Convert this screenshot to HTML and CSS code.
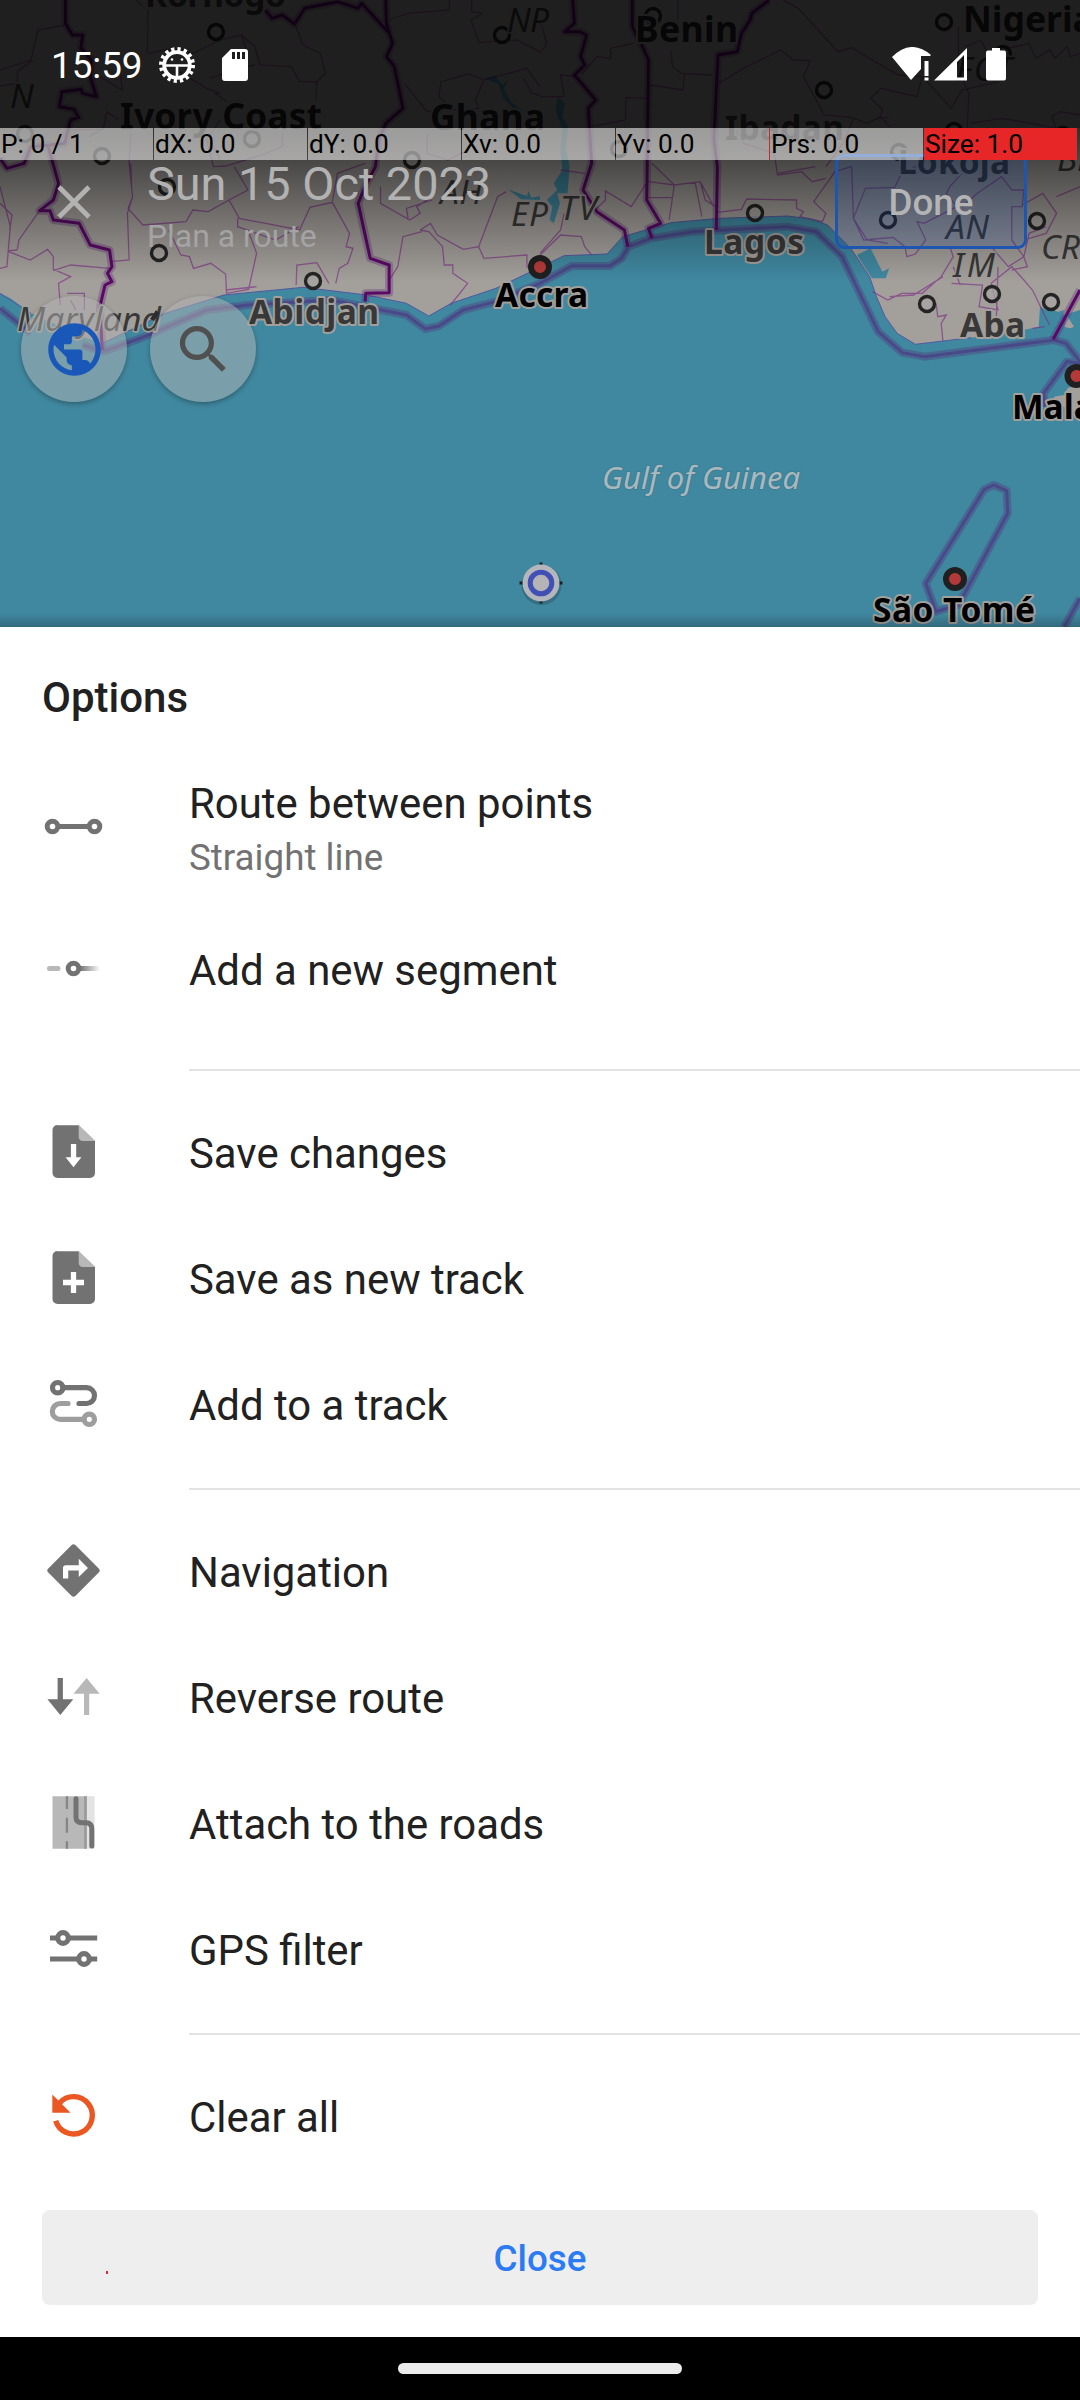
FILE: index.html
```html
<!DOCTYPE html>
<html lang="en">
<head>
<meta charset="utf-8">
<title>Plan a route</title>
<link rel="stylesheet" href="styles.css">
</head>
<body>
<div class="screen">
  <section class="map-area">
    <svg class="map" viewBox="0 0 3136 1881" preserveAspectRatio="none" aria-hidden="true">
      <path class="land" d="M0 0H3136V930L3090 945L3050 925L3030 960L3045 975L2970 990L2820 1013L2658 1033L2605 1000L2570 950L2545 890L2525 830L2470 745L2403 675L2358 658L2288 648L2088 655L1948 668L1808 710L1763 762L1638 767L1568 802L1440 865L1310 910L1245 948L1180 910L1065 885L880 862L650 885L480 940L297 1030L240 1010L90 940L30 895L0 880Z"/>
      <path class="land" d="M3136 1150L3100 1165L3090 1185L3060 1190L3075 1215L3136 1240ZM3090 980l10-30 25 40Z"/>
      <path class="water" d="M1408 237l30-12 20 30 20-18-15 28 20 40 40 30-30-8-30-30-15-45ZM1475 568l55 20 5-15 8 20 25-5v12l-55-2ZM1620 290l20 20-8 40 18 30-8 60 12 60-6 80-30 0 8 30-18 60-12-10 8-40-16-20 30-30-10-20 25-40-6-60 6-60-20-60ZM2488 765l40-20 34 70 20-10-10 30-40 0ZM3020 920l40 20 30-10-10 40 20 20 36-20v60l-60-20-60-30Z"/>
      <g class="district">
        <path d="M430 0L428 160M190 75L110 90L90 180L0 210M95 180L50 215L50 250L0 258M430 160L500 145L560 160L640 120L700 105L740 140L755 195L845 200L870 245L920 245L945 220L930 160L880 135L858 75M395 0L415 20M700 105L715 145L690 165M520 215L600 265L640 280L625 280L660 305M610 235L690 205L740 195M290 230L355 270L350 225M210 390L300 388L310 335L345 360M300 385L260 410M920 245L917 300M640 360L600 420L620 500L655 498L760 465L820 440L820 400M620 440L640 480M380 400L375 490L385 590L370 640L375 780L320 785M385 590L372 625L415 675L540 665L560 630L605 635L665 600L720 570L680 500M380 490L382 555M665 600L695 655L870 690L900 622L965 607L1015 700L1005 740L1025 745L1010 790L985 805L975 850M690 655L690 680L800 720L868 680M490 690L525 765L550 770L562 805L612 790L655 822L658 880L722 868L745 760L720 690M655 870L745 860M860 855L862 795L920 788L955 850M965 605L980 520L1060 490M1105 560L1105 610L1190 660L1220 640L1210 620L1255 590M1185 655L1180 625L1255 600M1220 690L1250 670L1270 705L1345 748L1390 740L1445 590L1470 575M1220 690L1245 695L1285 740L1290 795L1315 795L1315 820L1358 850L1308 915M1130 840L1155 800L1170 710L1225 695M1390 740L1405 775L1530 765L1530 800L1555 820M1175 250L1240 335L1390 325L1380 300L1405 240L1360 222L1280 245L1275 290L1320 330M1130 60L1185 40L1305 30L1305 0M1370 0L1370 35L1400 40L1368 60L1390 128L1500 120L1568 155M1405 240L1530 205L1568 260M1520 235L1545 280L1568 285M0 560L30 680L20 800L0 805M50 750L55 720L115 632M25 752L50 750M25 755L88 780L138 748L155 770L155 808L205 830L170 850L175 915M155 812L205 795L318 805M195 880L245 880L245 930M205 900L220 930M0 610L35 645L28 690M1240 400V460L1300 480L1350 455"/>
        <path transform="translate(1568 0)" d="M400 0L400 60M270 130L205 145L205 175L165 170L120 225M380 150L385 200L410 220L500 225M320 255L415 270L420 220M315 295L250 293L248 360L150 380M520 250L590 205L700 150L735 180L785 182L765 230L825 345L905 352L950 370L990 350L1015 380M705 0L750 25L865 155L905 143L1040 225L1110 230L1095 290L990 265L960 295L995 330L985 355L1012 352M1110 230L1195 325L1225 270L1335 245L1310 200M0 60L20 130L0 160M0 290L70 290L60 225L110 230M1215 80V210L1245 280L1240 400M1235 140L1280 120L1300 160L1420 130L1440 175L1480 150L1495 175L1530 140L1540 170L1568 160M1250 370L1340 355L1400 365L1500 385L1485 350L1510 335L1568 345M910 355L880 430L830 500M560 375L590 430L680 460L690 525L760 515L790 545L830 535M690 520L800 500M315 545L390 555L465 545L480 600L510 620M390 555L375 660M325 490L390 555M465 545L505 620M315 593L385 592M315 540L265 620L190 573L190 600L160 630M510 638L585 628L600 597L745 600L745 625L765 635L755 650L820 665L830 640L795 605L860 510M0 760L60 690L70 640M0 765L60 705L120 710L130 740L150 765M60 510L130 520M450 545L470 650M855 515L905 500L910 655L940 720L1025 712L1060 740L1065 770L1090 762L1120 720L1095 665L1115 670L1210 620L1180 580L1190 560L1225 520M910 655L945 565L1030 562L1050 520L1110 490M910 655L950 720L1010 730M1225 620L1270 580L1340 530L1370 570L1405 570L1400 620L1370 620L1370 720L1405 770L1360 800L1310 740M1400 615L1460 580L1500 640L1470 700L1405 720M1405 770L1420 700L1470 680M1190 740L1200 770L1165 830L1110 880L1050 880L1010 900L965 875M1170 830L1085 885L1015 890M1195 850L1285 855L1275 920L1330 930L1310 850L1370 800L1405 840L1430 870L1465 945L1480 975M1150 910L1155 950L1180 945L1165 970L1170 1025M1200 800L1220 855M1430 985L1465 980M1500 590L1568 560M1405 770L1415 800L1370 810M1330 800L1325 960"/>
      </g>
      <g class="coast"><path d="M0 880L90 940M297 1030L480 940L650 885L880 862L1065 885L1180 910L1245 948L1310 910L1440 865L1568 802L1638 767L1763 762L1808 710L1948 668L2088 655L2288 648L2358 658L2403 675L2470 745L2525 830L2545 890L2570 950L2605 1000L2658 1033L2820 1013"/></g>
      <g>
        <path class="sea-halo" d="M0 925L90 1000M240 1035L300 1055L420 1010L600 930L720 915L960 900L1180 945L1235 987L1275 978L1345 930L1440 905L1568 850L1660 798L1770 798L1805 775L1825 740L1890 715L2010 695L2285 680L2370 695L2445 770L2550 995L2620 1058L2685 1070L3060 1020L3095 1030L3136 1085M3136 1090L3098 1085L3030 1180L3035 1220M2886 1455L2923 1472L2926 1540L2783 1815L2718 1835L2688 1750L2858 1468ZM3090 1881L3136 1795"/>
        <path class="sea-line" d="M0 925L90 1000M240 1035L300 1055L420 1010L600 930L720 915L960 900L1180 945L1235 987L1275 978L1345 930L1440 905L1568 850L1660 798L1770 798L1805 775L1825 740L1890 715L2010 695L2285 680L2370 695L2445 770L2550 995L2620 1058L2685 1070L3060 1020L3095 1030L3136 1085M3136 1090L3098 1085L3030 1180L3035 1220M2886 1455L2923 1472L2926 1540L2783 1815L2718 1835L2688 1750L2858 1468ZM3090 1881L3136 1795"/>
      </g>
      <g>
        <path class="country-halo" d="M190 0L190 70L210 105L240 105L235 145L265 180L262 230L280 290L240 280L235 268L180 275L172 320L215 328L228 352L205 360L188 430L145 435L90 440L70 490L20 505L0 475M140 440L170 550L155 600L115 632L145 632L155 660L230 670L262 735L318 750L325 800L312 820L325 845L305 855L290 920L297 1050M770 30L790 55L820 45L855 72L885 25L980 5L1040 25L1050 10L1130 100M1120 0L1122 70L1140 130L1122 170L1145 200L1170 325L1120 370L1100 420L1090 500L1060 560L1040 610L1075 775L1130 795L1130 878L1062 880L1060 905M1663 0L1668 70L1640 95L1683 95L1703 105L1686 170L1698 195L1668 225L1730 300L1708 325L1718 490L1693 570L1733 635L1813 690L1823 740M1836 0L1836 80L1868 145L1883 180L1878 600L1918 670L1883 685L1893 715M2233 0L2183 40L2178 60L2153 100L2141 155L2085 165L2073 420L2083 500L2080 690M3136 870L3058 1018"/>
        <path class="country-line" d="M190 0L190 70L210 105L240 105L235 145L265 180L262 230L280 290L240 280L235 268L180 275L172 320L215 328L228 352L205 360L188 430L145 435L90 440L70 490L20 505L0 475M140 440L170 550L155 600L115 632L145 632L155 660L230 670L262 735L318 750L325 800L312 820L325 845L305 855L290 920L297 1050M770 30L790 55L820 45L855 72L885 25L980 5L1040 25L1050 10L1130 100M1120 0L1122 70L1140 130L1122 170L1145 200L1170 325L1120 370L1100 420L1090 500L1060 560L1040 610L1075 775L1130 795L1130 878L1062 880L1060 905M1663 0L1668 70L1640 95L1683 95L1703 105L1686 170L1698 195L1668 225L1730 300L1708 325L1718 490L1693 570L1733 635L1813 690L1823 740M1836 0L1836 80L1868 145L1883 180L1878 600L1918 670L1883 685L1893 715M2233 0L2183 40L2178 60L2153 100L2141 155L2085 165L2073 420L2083 500L2080 690M3136 870L3058 1018"/>
      </g>
    </svg>
    <svg class="map" viewBox="0 0 1080 627">
      <g class="town">
        <circle cx="216" cy="32" r="7.5"/><circle cx="502" cy="35" r="7.5"/><circle cx="25" cy="134" r="7.5"/><circle cx="102" cy="156" r="7.5"/><circle cx="252" cy="139" r="7.5"/><circle cx="412" cy="160" r="7.5"/><circle cx="167" cy="187" r="7.5"/><circle cx="159" cy="253" r="7.5"/><circle cx="313" cy="281" r="7.5"/><circle cx="653" cy="16" r="7.5"/><circle cx="944" cy="22" r="7.5"/><circle cx="1003" cy="54" r="7.5"/><circle cx="824" cy="90" r="7.5"/><circle cx="954" cy="131" r="7.5"/><circle cx="1063" cy="135" r="7.5"/><circle cx="619" cy="149" r="7.5"/><circle cx="899" cy="152" r="7.5"/><circle cx="755" cy="213" r="7.5"/><circle cx="888" cy="220" r="7.5"/><circle cx="1037" cy="221" r="7.5"/><circle cx="927" cy="304" r="7.5"/><circle cx="992" cy="294" r="7.5"/><circle cx="1051" cy="302" r="7.5"/>
      </g>
      <g class="capital">
        <circle cx="540" cy="267" r="9"/><circle cx="955" cy="579" r="9"/><circle cx="1076.500" cy="376" r="9"/>
      </g>
      <g class="label">
        <text x="145" y="7" textLength="141">Korhogo</text>
        <text class="country" x="120" y="129" textLength="202">Ivory Coast</text>
        <text class="country" x="430" y="130" textLength="115">Ghana</text>
        <text class="country" x="635" y="42" textLength="103">Benin</text>
        <text class="country" x="963" y="32">Nigeria</text>
        <text x="725" y="140" textLength="119">Ibadan</text>
        <text x="898" y="174" textLength="112">Lokoja</text>
        <text x="704" y="254" textLength="100">Lagos</text>
        <text x="249" y="324" textLength="130">Abidjan</text>
        <text x="960" y="337" textLength="65">Aba</text>
      </g>
      <g class="label label-capital">
        <text x="495" y="307" textLength="93">Accra</text>
        <text x="1012" y="419">Malabo</text>
        <text x="873" y="622" textLength="162">São Tomé</text>
      </g>
      <g class="label label-region">
        <text x="10" y="108">N</text>
        <text x="507" y="32" textLength="42">NP</text>
        <text x="440" y="204" textLength="42">AH</text>
        <text x="511" y="226" textLength="37">EP</text>
        <text x="560" y="220" textLength="37">TV</text>
        <text x="956" y="81" textLength="56">FCT</text>
        <text x="946" y="239" textLength="43">AN</text>
        <text x="953" y="277" textLength="42">IM</text>
        <text x="1041" y="259">CRS</text>
        <text x="1057" y="171">BE</text>
        <text x="17" y="331" textLength="144">Maryland</text>
      </g>
      <path d="M150 319l6-9 3 3-5 8z" fill="#2c2c2c"/>
      <text class="gulf" x="602" y="489" textLength="198">Gulf of Guinea</text>
      <g>
        <circle cx="541.500" cy="585" r="20" fill="#000" opacity=".18"/>
        <path d="M519.500 583h43M541 562.500v41" stroke="#14202a" stroke-width="3"/>
        <circle cx="541" cy="583" r="18.500" fill="#b4b6bc"/>
        <circle cx="541" cy="583" r="10.800" fill="#b4b4b6" stroke="#4150b4" stroke-width="5"/>
      </g>
    </svg>
    <div class="scrim"></div>
    <header class="content">
      <div class="status">
        <span class="clock">15:59</span>
        <svg class="gear" viewBox="0 0 38 38"><circle cx="19" cy="19" r="16" fill="none" stroke="#fff" stroke-width="4" stroke-dasharray="3.200 3.083"/><circle cx="19" cy="19" r="12.800" fill="none" stroke="#fff" stroke-width="3.800"/><path d="M6 19.500h26M19 19.500v13" stroke="#fff" stroke-width="2.600"/><circle cx="14" cy="13.500" r="1.300" fill="#fff"/><circle cx="24" cy="13.500" r="1.300" fill="#fff"/></svg>
        <svg class="sd" viewBox="0 0 26 32"><path fill="#fff" fill-rule="evenodd" d="M9 0H23a3 3 0 0 1 3 3V29a3 3 0 0 1-3 3H3a3 3 0 0 1-3-3V9ZM10 3v7h3V3Zm5 0v7h3V3Zm5 0v7h3V3Z"/></svg>
        <svg class="signals" viewBox="0 0 116 34"><g fill="#fff"><path d="M0 10Q19-9 39 8L38 9H29V22L19 33Z"/><path d="M32.500 14h4v15h-4zM32.500 30.500h4v3h-4z"/><path fill-rule="evenodd" d="M42 33.500L75 1V33.500ZM65 15V30.500h7V8Z"/><path d="M100 1h8v2.500h4a2 2 0 0 1 2 2V31.500a2 2 0 0 1-2 2H96a2 2 0 0 1-2-2V5.500a2 2 0 0 1 2-2h4Z"/></g></svg>
      </div>
      <div class="toolbar">
        <svg class="close-x" viewBox="0 0 34 34"><path d="M2 2L32 32M32 2L2 32" stroke="#b2b2b2" stroke-width="4.800"/></svg>
        <div class="titles">
          <div class="title">Sun 15 Oct 2023</div>
          <div class="subtitle">Plan a route</div>
        </div>
        <div class="done">Done</div>
      </div>
      <div class="fabs">
        <div class="fab"><svg viewBox="0 0 24 24"><path fill="#1958b8" d="M12 2C6.480 2 2 6.480 2 12s4.480 10 10 10 10-4.480 10-10S17.520 2 12 2zm-1 17.930c-3.950-.49-7-3.850-7-7.930 0-.62.08-1.210.21-1.790L9 15v1c0 1.100.9 2 2 2v1.930zm6.900-2.540c-.26-.81-1-1.390-1.900-1.390h-1v-3c0-.55-.45-1-1-1H8v-2h2c.55 0 1-.45 1-1V7h2c1.100 0 2-.9 2-2v-.41c2.930 1.190 5 4.060 5 7.410 0 2.080-.8 3.970-2.100 5.390z"/></svg></div>
        <div class="fab"><svg viewBox="0 0 24 24"><path fill="#505050" d="M15.500 14h-.79l-.28-.27C15.410 12.590 16 11.110 16 9.500 16 5.910 13.090 3 9.500 3S3 5.910 3 9.500 5.910 16 9.500 16c1.610 0 3.090-.59 4.230-1.570l.27.28v.79l5 4.990L20.490 19l-4.990-5zm-6 0C7.010 14 5 11.990 5 9.500S7.010 5 9.500 5 14 7.010 14 9.500 11.990 14 9.500 14z"/></svg></div>
      </div>
    </header>
    <div class="pointer-bar">
      <span>P: 0 / 1</span><span>dX: 0.0</span><span>dY: 0.0</span><span>Xv: 0.0</span><span>Yv: 0.0</span><span class="level">Prs: 0.0</span><span class="full">Size: 1.0</span>
    </div>
  </section>

  <main class="sheet">
    <h1>Options</h1>
    <div class="row row-two">
      <svg class="icon" viewBox="0 0 63 63"><g fill="none" stroke="#727272" stroke-width="5"><circle cx="10.500" cy="31.500" r="5.300"/><circle cx="52.500" cy="31.500" r="5.300"/><path d="M16 31.500h31"/></g></svg>
      <div><div class="name">Route between points</div><div class="desc">Straight line</div></div>
    </div>
    <div class="row row-segment">
      <svg class="icon" viewBox="0 0 63 63"><defs><linearGradient id="fade" gradientUnits="userSpaceOnUse" x1="38" y1="0" x2="58" y2="0"><stop stop-color="#727272"/><stop offset="1" stop-color="#727272" stop-opacity="0"/></linearGradient></defs><rect x="5" y="29" width="13.500" height="5" rx="2.500" fill="#b8b8b8"/><rect x="38" y="29" width="20" height="5" fill="url(#fade)"/><circle cx="31.500" cy="31.500" r="5.300" fill="none" stroke="#727272" stroke-width="5"/></svg>
      <div class="name">Add a new segment</div>
    </div>
    <div class="divider divider-first"></div>
    <div class="row">
      <svg class="icon" viewBox="0 0 63 63"><path fill="#727272" d="M15 5.200H36.700L53 21V53a5 5 0 0 1-5 5H15.500a5 5 0 0 1-5-5V10a5 5 0 0 1 5-5Z"/><path fill="#b8b8b8" d="M36.700 5.200L53 21H41a4.500 4.500 0 0 1-4.300-4.500Z"/><path fill="#fff" d="M28.900 24h5.300v13.200h5.200L31.500 47.200l-7.900-10h5.300Z"/></svg>
      <div class="name">Save changes</div>
    </div>
    <div class="row">
      <svg class="icon" viewBox="0 0 63 63"><path fill="#727272" d="M15 5.200H36.700L53 21V53a5 5 0 0 1-5 5H15.500a5 5 0 0 1-5-5V10a5 5 0 0 1 5-5Z"/><path fill="#b8b8b8" d="M36.700 5.200L53 21H41a4.500 4.500 0 0 1-4.300-4.500Z"/><path stroke="#fff" stroke-width="5.300" d="M31.500 26v21M21 36.500h21"/></svg>
      <div class="name">Save as new track</div>
    </div>
    <div class="row">
      <svg class="icon" viewBox="0 0 63 63"><g fill="none" stroke-width="5.200" stroke-linecap="round"><g stroke="#9e9e9e"><circle cx="47.300" cy="47.300" r="5.200"/><path d="M42 47.300H18.200a7.900 7.900 0 0 1 0-15.800H26"/></g><g stroke="#727272"><circle cx="15.700" cy="15.700" r="5.200"/><path d="M21 15.700H44.600a7.900 7.900 0 0 1 0 15.800H37"/></g></g></svg>
      <div class="name">Add to a track</div>
    </div>
    <div class="divider"></div>
    <div class="row">
      <svg class="icon" viewBox="0 0 24 24"><path fill="#727272" d="M21.710 11.290l-9-9c-.39-.39-1.020-.39-1.410 0l-9 9c-.39.39-.39 1.020 0 1.410l9 9c.39.39 1.020.39 1.410 0l9-9c.39-.38.39-1.010 0-1.410zM14 14.500V12h-4v3H8v-4c0-.55.45-1 1-1h5V7.500l3.500 3.500-3.500 3.500z"/></svg>
      <div class="name">Navigation</div>
    </div>
    <div class="row">
      <svg class="icon" viewBox="0 0 63 63"><path fill="#727272" d="M15.600 13h5.300V34.200H31.300L18.300 50L5.400 34.200H15.600Z"/><path fill="#b8b8b8" d="M44.600 13L57.700 28.700H47.200V50H42V28.700H31.500Z"/></svg>
      <div class="name">Reverse route</div>
    </div>
    <div class="row">
      <svg class="icon" viewBox="0 0 63 63"><path fill="#b8b8b8" d="M10.500 5.200H45V57.700H10.500Z"/><path fill="#e3e3e3" d="M45 5.200h7.600V57.700H45Z"/><path stroke="#9a9a9a" stroke-width="2.600" d="M43.400 5.200V57.700"/><path stroke="#858585" stroke-width="2.300" d="M24.900 5.200V18M24.900 26.700V41.700M24.900 50.200V57.700"/><path fill="none" stroke="#727272" stroke-width="5" stroke-linecap="round" d="M34 7.700V26q0 5.700 6 5.700h4q5.800 0 5.800 6V55"/></svg>
      <div class="name">Attach to the roads</div>
    </div>
    <div class="row">
      <svg class="icon" viewBox="0 0 63 63"><g fill="none" stroke="#727272" stroke-width="5.200"><path d="M8 21h8M26 21h29.200M8 42h29M47 42h8.200"/><circle cx="21" cy="21" r="5.300"/><circle cx="42" cy="42" r="5.300"/></g></svg>
      <div class="name">GPS filter</div>
    </div>
    <div class="divider"></div>
    <div class="row">
      <svg class="icon" viewBox="0 0 63 63"><path fill="none" stroke="#ea5722" stroke-width="5.400" d="M13.700 36.700A18.700 18.700 0 1 0 17.500 19"/><path fill="#ea5722" d="M10.300 10.500V28.800H28.600Z"/></svg>
      <div class="name">Clear all</div>
    </div>
    <div class="close-button">Close<i class="touch-dot"></i></div>
  </main>
  <footer class="navbar"><div class="pill"></div></footer>
</div>
</body>
</html>
```
FILE: styles.css
```css
* { box-sizing: border-box; }
body { margin: 0; font-family: Roboto, "Liberation Sans", sans-serif; }
.screen { width: 1080px; height: 2400px; display: flex; flex-direction: column; background: #fff; overflow: hidden; }

/* Map and the controls floating above it */
.map-area { position: relative; height: 627px; flex: none; background: #4088a0; overflow: hidden; }
.map, .scrim { position: absolute; left: 0; top: 0; width: 1080px; height: 627px; }
.map path { vector-effect: non-scaling-stroke; }
.land { fill: #a39f9b; }
.water { fill: #4088a0; }
.district path { fill: none; stroke: #7a2a82; stroke-opacity: .62; stroke-width: 1.3; }
.coast path { fill: none; stroke: #5458a0; stroke-width: 1; }
.sea-halo, .country-halo { fill: none; stroke: #5a1f70; stroke-opacity: .3; stroke-width: 8; stroke-linejoin: round; }
.sea-line { fill: none; stroke: #4a4488; stroke-opacity: .85; stroke-width: 3; }
.country-line { fill: none; stroke: #5c0866; stroke-width: 3; stroke-linejoin: round; }
.town circle { fill: #a8a5a2; fill-opacity: .7; stroke: #242424; stroke-width: 3.4; }
.capital circle { fill: #b43a3a; stroke: #202020; stroke-width: 6; }
.label text { font: bold 33.5px "Noto Sans", sans-serif; fill: #383838; stroke: #a39f9b; stroke-width: 4; stroke-linejoin: round; paint-order: stroke; }
.label .country { font-size: 35.5px; fill: #202020; }
.label-capital text { fill: #000; }
.label-region text { font-weight: normal; font-style: italic; stroke-width: 3; }
.gulf { font: italic 31px "Noto Sans", sans-serif; fill: #aab8be; stroke: #3d7f95; stroke-width: 2; paint-order: stroke; }
.scrim { background: linear-gradient(rgba(0,0,1,.805) 128px, rgba(0,0,0,.7) 128px, rgba(0,0,0,0) 282px, rgba(0,0,0,0) 613px, rgba(0,0,0,.22)); }
.content { position: relative; }

.status { height: 128px; display: flex; padding-left: 51px; align-items: flex-start; }
.clock { font-size: 36.75px; line-height: 44px; margin-top: 44px; color: #fff; width: 94px; }
.gear { width: 38px; height: 38px; margin: 46px 0 0 13px; }
.sd { width: 26px; height: 32px; margin: 49px 0 0 26px; }
.signals { width: 116px; height: 34px; margin: 47px 72px 0 auto; }

.toolbar { height: 147px; display: flex; align-items: center; padding: 0 53px 0 57px; }
.close-x { width: 34px; height: 34px; }
.titles { margin: 9px 0 0 56px; display: flex; flex-direction: column; gap: 5px; white-space: nowrap; }
.title { font-size: 46.8px; line-height: 54px; color: #b2b2b2; }
.subtitle { font-size: 31.9px; line-height: 40px; color: #a4a4a4; }
.done { margin-left: auto; width: 192px; height: 95px; border: 3px solid #1c56b0; border-radius: 9px; background: rgba(30,75,160,.2); color: #b4b4b4; font-size: 36.75px; font-weight: 500; line-height: 92px; text-align: center; }

.fabs { display: flex; gap: 23px; padding: 21px 0 0 21px; }
.fab { width: 106px; height: 106px; border-radius: 50%; background: rgba(180,180,180,.5); box-shadow: 0 2px 5px rgba(0,0,0,.3); display: flex; align-items: center; justify-content: center; }
.fab svg { width: 63px; height: 63px; }

.pointer-bar { position: absolute; left: 0; top: 128px; width: 1077px; height: 32px; display: flex; gap: 1px; }
.pointer-bar span { flex: 1; background: rgba(255,255,255,.52); padding-left: 1px; font-size: 26.25px; line-height: 33px; color: #000; white-space: nowrap; }
.pointer-bar .level { box-shadow: -1px 0 0 #c02c2c; }
.pointer-bar .full { background: #e72727; }

/* Options sheet */
.sheet { height: 1710px; flex: none; }
h1 { margin: 0; padding: 1px 0 0 42px; height: 140px; font-size: 42px; font-weight: 500; line-height: 140px; color: #212121; }
.row { height: 126px; display: flex; align-items: center; padding-left: 42px; gap: 84px; color: #212121; }
.icon { width: 63px; height: 63px; flex: none; margin-bottom: 5px; }
.name { font-size: 41.9px; line-height: 56px; }
.row-two { height: 140px; align-items: flex-start; padding-top: 9px; }
.row-two .icon { margin-top: 19px; }
.row-segment { padding-top: 2px; }
.desc { font-size: 36.75px; line-height: 52px; color: #727272; }
.divider { height: 41px; padding: 19px 0 20px 189px; background: #e3e3e3 content-box; }
.divider-first { margin-top: 17px; }
.close-button { position: relative; margin: 29px 42px 0; height: 95px; border-radius: 8px; background: #eee; color: #2a7bf4; font-size: 36.75px; font-weight: 500; line-height: 97px; text-align: center; }
.touch-dot { position: absolute; left: 64px; top: 61px; width: 2px; height: 3px; background: #d03030; }

.navbar { height: 63px; background: #000; display: flex; justify-content: center; align-items: flex-start; padding-top: 26px; }
.pill { width: 284px; height: 11px; border-radius: 6px; background: #ececec; }
```
